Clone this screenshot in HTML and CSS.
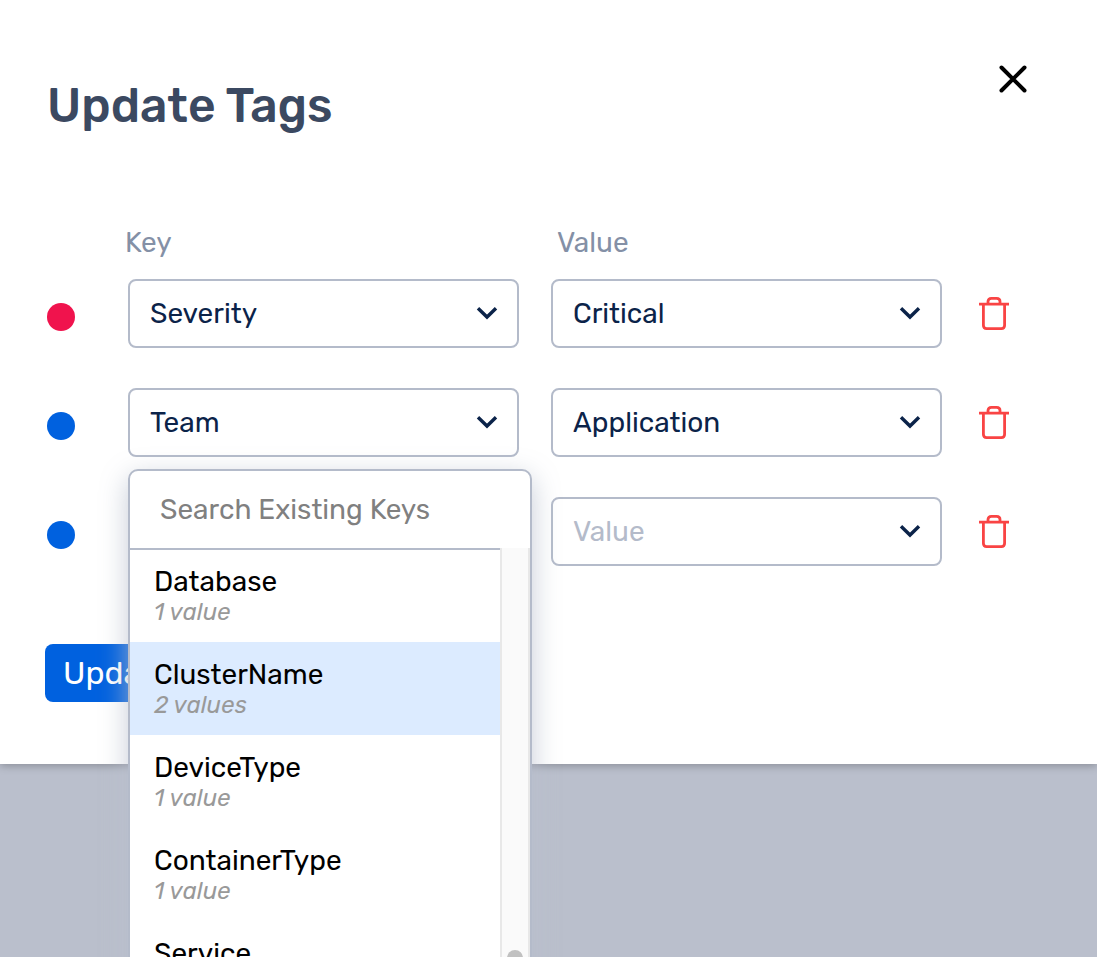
FILE: index.html
```html
<!DOCTYPE html>
<html lang="en">
<head>
<meta charset="utf-8">
<meta name="viewport" content="width=device-width, initial-scale=1">
<title>Update Tags</title>
<link rel="stylesheet" href="styles.css">
</head>
<body>
<svg class="sprite" aria-hidden="true">
  <symbol id="chevron" viewBox="0 0 22 14"><path d="M2 2.2 11 11 20 2.2" fill="none" stroke="currentColor" stroke-width="3.4"/></symbol>
  <symbol id="trash" viewBox="0 0 30 34"><path d="M0 7.2H30M4.4 7V28.2Q4.4 31.6 7.7 31.6H22.3Q25.6 31.6 25.6 28.2V7M9 7V4.6Q9 1.4 12.4 1.4H17.6Q21 1.4 21 4.6V7" fill="none" stroke="currentColor" stroke-width="2.8"/></symbol>
</svg>
<main class="dialog" role="dialog" aria-labelledby="title">
  <header class="dialog-head">
    <h1 class="title" id="title">Update Tags</h1>
    <button class="close" type="button" aria-label="Close">
      <svg width="28" height="28" viewBox="0 0 28 28"><path d="M2.5 2.5 25.5 25.5M25.5 2.5 2.5 25.5" stroke="currentColor" stroke-width="4" stroke-linecap="round"/></svg>
    </button>
  </header>
  <form class="form">
    <div class="labels"><span id="key-label">Key</span><span id="value-label">Value</span></div>
    <div class="row">
      <span class="dot dot-red"></span>
      <div class="field">
        <select class="select" aria-labelledby="key-label"><option>Severity</option></select>
        <svg class="chevron"><use href="#chevron"/></svg>
      </div>
      <div class="field">
        <select class="select" aria-labelledby="value-label"><option>Critical</option></select>
        <svg class="chevron"><use href="#chevron"/></svg>
      </div>
      <button class="delete" type="button" aria-label="Delete tag"><svg class="trash"><use href="#trash"/></svg></button>
    </div>
    <div class="row">
      <span class="dot"></span>
      <div class="field">
        <select class="select" aria-labelledby="key-label"><option>Team</option></select>
        <svg class="chevron"><use href="#chevron"/></svg>
        <div class="menu">
          <input class="search" type="text" placeholder="Search Existing Keys" aria-label="Search Existing Keys">
          <div class="menu-body">
            <ul class="options">
              <li class="option"><span class="name">Database</span><em class="count">1 value</em></li>
              <li class="option option-active"><span class="name">ClusterName</span><em class="count">2 values</em></li>
              <li class="option"><span class="name">DeviceType</span><em class="count">1 value</em></li>
              <li class="option"><span class="name">ContainerType</span><em class="count">1 value</em></li>
              <li class="option"><span class="name">Service</span></li>
            </ul>
            <div class="track"><span class="thumb"></span></div>
          </div>
        </div>
      </div>
      <div class="field">
        <select class="select" aria-labelledby="value-label"><option>Application</option></select>
        <svg class="chevron"><use href="#chevron"/></svg>
      </div>
      <button class="delete" type="button" aria-label="Delete tag"><svg class="trash"><use href="#trash"/></svg></button>
    </div>
    <div class="row">
      <span class="dot"></span>
      <div class="field">
        <select class="select select-empty" aria-labelledby="key-label"><option></option></select>
      </div>
      <div class="field">
        <select class="select select-empty" aria-labelledby="value-label"><option>Value</option></select>
        <svg class="chevron"><use href="#chevron"/></svg>
      </div>
      <button class="delete" type="button" aria-label="Delete tag"><svg class="trash"><use href="#trash"/></svg></button>
    </div>
  </form>
  <footer class="dialog-foot"><button class="submit" type="button">Update</button></footer>
</main>
</body>
</html>
```
FILE: styles.css
```css
* { box-sizing: border-box; }
html, body { height: 100%; }
body {
  margin: 0;
  overflow: hidden;
  background: #babfcc;
  font-family: Rubik, Roboto, "Liberation Sans", sans-serif;
  font-size: 28px;
}
button, input, select { font: inherit; }
button { border: 0; padding: 0; background: none; cursor: pointer; }
svg { display: block; }
.sprite { position: absolute; width: 0; height: 0; }

.dialog {
  padding: 65px 70px 62px 47px;
  background: #fff;
  box-shadow: 0 2px 8px rgba(0, 0, 0, 0.25);
}
.dialog-head { display: flex; justify-content: space-between; align-items: flex-start; }
.title { margin: 12px 0 0; font-size: 48px; line-height: 58px; font-weight: 500; color: #3b4961; }
.close { color: #000; }

.form { display: flex; flex-direction: column; gap: 40px; padding: 91px 18px 0 0; }
.labels {
  display: grid;
  grid-template-columns: 1fr 1fr;
  padding: 0 20px 0 78px;
  margin-bottom: -21px;
  line-height: 34px;
  color: #8490a6;
}
.row { display: grid; grid-template-columns: 49px minmax(0, 1fr) minmax(0, 1fr) 35px; column-gap: 32px; align-items: center; }
.dot { width: 28px; height: 28px; margin-top: 7px; border-radius: 50%; background: #0061df; }
.dot-red { background: #f0134d; }

.field { position: relative; }
.select {
  display: block;
  width: 100%;
  height: 69px;
  padding: 0 60px 0 20px;
  border: 2px solid #b4bbca;
  border-radius: 8px;
  background: #fff;
  color: #0b2349;
  appearance: none;
}
.select-empty { color: #b4bbca; }
.chevron { position: absolute; top: 27px; right: 21px; width: 22px; height: 14px; color: #0b2349; pointer-events: none; }
.delete { justify-self: end; color: #f94444; }
.trash { width: 30px; height: 34px; }

.menu {
  position: absolute;
  z-index: 2;
  top: calc(100% + 12px);
  left: 0;
  width: calc(100% + 13px);
  border: 2px solid #b4bbca;
  border-radius: 10px;
  background: #fff;
  box-shadow: 0 8px 28px rgba(184, 191, 205, 0.8);
}
.search {
  display: block;
  width: 100%;
  height: 77px;
  padding: 0 30px;
  border: 0;
  border-radius: 10px;
  background: none;
  outline: 0;
}
.search::placeholder { color: #808080; opacity: 1; }
.menu-body { display: flex; }
.options { flex: 1; margin: 0; padding: 0; border-top: 2px solid #b4bbca; list-style: none; }
.option { display: flex; flex-direction: column; height: 93px; padding: 16px 24px 0; color: #000; }
.option:first-child { height: 92px; padding-top: 15px; }
.option-active { background: #dcebff; }
.name { line-height: 33px; }
.count { font-size: 24px; line-height: 28px; color: #999; }
.track { display: flex; justify-content: center; align-items: flex-end; width: 30px; border: solid #e8e8e8; border-width: 0 2px; background: #fafafa; }
.thumb { width: 16px; height: 64px; border-radius: 8px; background: #c1c1c1; }

.dialog-foot { padding-top: 78px; margin-left: -2px; }
.submit { height: 58px; padding: 0 18px; border-radius: 8px; background: #0061df; color: #fff; font-size: 32px; }
```
